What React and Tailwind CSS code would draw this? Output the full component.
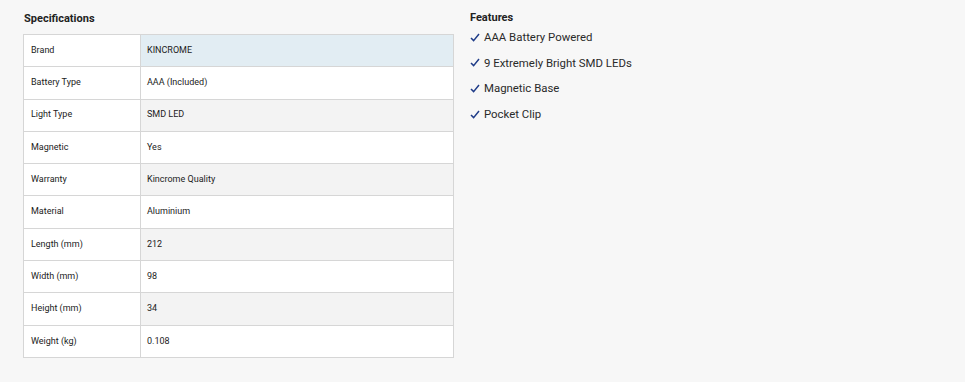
import React from "react";

const specs = [
  ["Brand", "KINCROME"],
  ["Battery Type", "AAA (Included)"],
  ["Light Type", "SMD LED"],
  ["Magnetic", "Yes"],
  ["Warranty", "Kincrome Quality"],
  ["Material", "Aluminium"],
  ["Length (mm)", "212"],
  ["Width (mm)", "98"],
  ["Height (mm)", "34"],
  ["Weight (kg)", "0.108"],
];

const features = [
  "AAA Battery Powered",
  "9 Extremely Bright SMD LEDs",
  "Magnetic Base",
  "Pocket Clip",
];

export default function App() {
  return (
    <div className="w-[965px] h-[382px] bg-[#f7f7f7] font-['Roboto',sans-serif] text-[#222]">
      <div className="flex pl-[23px] pt-[10px]">
        {/* Specifications */}
        <div className="w-[431px]">
          <h2 className="text-[11px] font-bold leading-[16px] pl-[1px] pt-[1px] mb-[7px]">Specifications</h2>
          <table className="w-[431px] border-collapse text-[9px]">
            <tbody>
              {specs.map(([k, v], i) => (
                <tr key={k} className="h-[32.3px]">
                  <td className="w-[117px] border border-[#d6d6d6] bg-white pl-[7px]">{k}</td>
                  <td
                    className={
                      "border border-[#d6d6d6] pl-[6px] " +
                      (i === 0 ? "bg-[#e2edf3]" : i % 2 === 0 ? "bg-[#f3f3f3]" : "bg-white")
                    }
                  >
                    {v}
                  </td>
                </tr>
              ))}
            </tbody>
          </table>
        </div>

        {/* Features */}
        <div className="ml-[16px]">
          <h2 className="text-[11px] font-bold leading-[14px] pt-[1px]">Features</h2>
          <ul>
            {features.map((f) => (
              <li key={f} className="flex items-center h-[25.6px] text-[11.4px] text-[#2a2a2a]">
                <svg className="w-[10px] h-[9px] mr-[4px] mt-[-1px]" viewBox="0 0 10 9">
                  <path d="M1 5 L3.6 7.6 L9 1" fill="none" stroke="#1f3c88" strokeWidth="1.5" />
                </svg>
                <span>{f}</span>
              </li>
            ))}
          </ul>
        </div>
      </div>
    </div>
  );
}
